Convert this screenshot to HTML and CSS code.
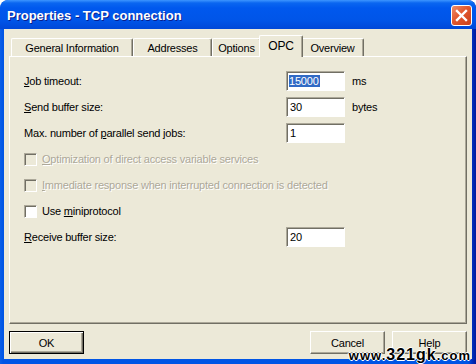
FILE: index.html
```html
<!DOCTYPE html>
<html lang="en">
<head>
  <meta charset="UTF-8" />
  <title>Properties - TCP connection</title>
  <link rel="stylesheet" href="styles.css">
</head>
<body>
  <div class="window">
    <div class="titlebar">
      <span class="title">Properties - TCP connection</span>
      <div class="close-btn">
        <svg width="13" height="13" viewBox="0 0 13 13">
          <path d="M2 2 L11 11 M11 2 L2 11" stroke="#fff" stroke-width="2.4" stroke-linecap="square" />
        </svg>
      </div>
    </div>

    <div class="client">
      <div class="tabs">
        <div class="tab tab-general">General Information</div>
        <div class="tab tab-addresses">Addresses</div>
        <div class="tab tab-options">Options</div>
        <div class="tab tab-opc active">OPC</div>
        <div class="tab tab-overview">Overview</div>
      </div>

      <div class="panel">
        <div class="row">
          <label class="field-label"><u>J</u>ob timeout:</label>
          <div class="textbox"><span class="selected">15000</span></div>
          <span class="unit">ms</span>
        </div>
        <div class="row">
          <label class="field-label"><u>S</u>end buffer size:</label>
          <div class="textbox">30</div>
          <span class="unit">bytes</span>
        </div>
        <div class="row">
          <label class="field-label">Max. number of <u>p</u>arallel send jobs:</label>
          <div class="textbox">1</div>
        </div>
        <div class="row disabled">
          <span class="checkbox"></span>
          <span class="check-label"><u>O</u>ptimization of direct access variable services</span>
        </div>
        <div class="row disabled">
          <span class="checkbox"></span>
          <span class="check-label"><u>I</u>mmediate response when interrupted connection is detected</span>
        </div>
        <div class="row">
          <span class="checkbox"></span>
          <span class="check-label">Use <u>m</u>iniprotocol</span>
        </div>
        <div class="row">
          <label class="field-label"><u>R</u>eceive buffer size:</label>
          <div class="textbox">20</div>
        </div>
      </div>

      <div class="buttons">
        <button class="btn default">OK</button>
        <div class="spacer"></div>
        <button class="btn">Cancel</button>
        <button class="btn">Help</button>
      </div>
    </div>

    <div class="watermark"><span class="www">www.</span>321gk<span class="www">.com</span></div>
  </div>
</body>
</html>
```

FILE: styles.css
```css
:root {
  --face: #ece9d8;
  --light: #ffffff;
  --shadow: #aca899;
  --dark: #716f64;
}

* {
  box-sizing: border-box;
  margin: 0;
  padding: 0;
}

body {
  background: #ffffff;
  font-family: 'Liberation Sans', Arial, sans-serif;
  font-size: 11px;
  letter-spacing: -0.2px;
  color: #000;
}

.window {
  width: 476px;
  height: 364px;
  display: flex;
  flex-direction: column;
  background: linear-gradient(to right, #0a5fe8 0, #0055e5 3px, #0055e5 468px, #0030c0 472px, #001a9c 100%);
  border-radius: 8px 8px 0 0;
  padding-bottom: 5px;
  position: relative;
  overflow: hidden;
}

.titlebar {
  height: 29px;
  display: flex;
  align-items: center;
  padding: 0 4px 0 7px;
  background: linear-gradient(#3d95ff 0, #0a66f0 3px, #0058ee 8px, #0055e8 70%, #0048d8 100%);
  border-radius: 8px 8px 0 0;
}

.title {
  flex: 1;
  color: #fff;
  font-weight: bold;
  font-size: 13px;
  letter-spacing: 0;
  text-shadow: 1px 1px 0 #0a1e8c;
  padding-top: 2px;
}

.close-btn {
  width: 21px;
  height: 21px;
  border: 1px solid #fff;
  border-radius: 3px;
  background: linear-gradient(135deg, #ec8e6c 0, #e2582e 45%, #c9401c 100%);
  display: flex;
  align-items: center;
  justify-content: center;
  margin-top: 2px;
}

.client {
  flex: 1;
  margin: 0 4px;
  background: var(--face);
  padding-top: 6px;
  display: flex;
  flex-direction: column;
}

/* tabs */
.tabs {
  display: flex;
  align-items: flex-end;
  height: 21px;
  margin: 0 5px;
  padding-left: 2px;
  position: relative;
  z-index: 1;
}

.tab {
  height: 18px;
  border-top: 1px solid var(--light);
  border-left: 1px solid var(--light);
  border-right: 1px solid var(--dark);
  box-shadow: inset -1px 0 0 var(--shadow);
  border-radius: 2px 2px 0 0;
  text-align: center;
  line-height: 18px;
  background: var(--face);
}

.tab-general { width: 122px; }
.tab-addresses { width: 79px; }
.tab-options { width: 49px; }
.tab-overview { width: 63px; }

.tab.active {
  width: 44px;
  height: 22px;
  margin: 0 -2px -1px;
  line-height: 20px;
  position: relative;
  z-index: 2;
  font-size: 12px;
}

.panel {
  height: 268px;
  margin: 0 5px;
  border-top: 1px solid var(--light);
  border-left: 1px solid var(--light);
  border-right: 1px solid var(--dark);
  border-bottom: 1px solid var(--dark);
  box-shadow: inset -1px -1px 0 var(--shadow);
  padding: 14px 14px;
  display: flex;
  flex-direction: column;
  gap: 6px;
}

.row {
  height: 20px;
  display: flex;
  align-items: center;
}

.field-label {
  width: 262px;
}

.textbox {
  width: 59px;
  height: 20px;
  background: #fff;
  border-top: 1px solid var(--shadow);
  border-left: 1px solid var(--shadow);
  border-right: 1px solid var(--light);
  border-bottom: 1px solid var(--light);
  box-shadow: inset 1px 1px 0 var(--dark);
  padding: 2px 0 0 3px;
  line-height: 14px;
}

.selected {
  background: #316ac5;
  color: #fff;
  padding: 0 1px 0 0;
  margin-left: -1px;
}

.unit {
  margin-left: 7px;
}

.checkbox {
  width: 13px;
  height: 13px;
  background: #fff;
  border-top: 1px solid var(--shadow);
  border-left: 1px solid var(--shadow);
  border-right: 1px solid var(--light);
  border-bottom: 1px solid var(--light);
  box-shadow: inset 1px 1px 0 var(--dark);
  margin-right: 5px;
}

.disabled .checkbox {
  background: var(--face);
}

.disabled .check-label {
  color: var(--shadow);
  text-shadow: 1px 1px 0 #fff;
}

/* buttons */
.buttons {
  display: flex;
  gap: 7px;
  margin: 7px 5px 0;
}

.spacer {
  flex: 1;
}

.btn {
  width: 75px;
  height: 23px;
  font-family: inherit;
  font-size: 11px;
  letter-spacing: inherit;
  background: var(--face);
  border-top: 1px solid var(--light);
  border-left: 1px solid var(--light);
  border-right: 1px solid var(--dark);
  border-bottom: 1px solid var(--dark);
  box-shadow: inset -1px -1px 0 var(--shadow);
}

.btn.default {
  border: 1px solid #000;
  box-shadow: inset 1px 1px 0 var(--light), inset -1px -1px 0 var(--dark), inset -2px -2px 0 var(--shadow);
}

.watermark {
  position: absolute;
  right: 5px;
  bottom: 0;
  font-family: 'Liberation Sans', Arial, sans-serif;
  font-weight: bold;
  font-size: 16px;
  letter-spacing: 1px;
  color: #000;
  text-shadow: 1px 0 0 #fff, -1px 0 0 #fff, 0 1px 0 #fff, 0 -1px 0 #fff;
}

.watermark .www {
  font-size: 13px;
}
```
